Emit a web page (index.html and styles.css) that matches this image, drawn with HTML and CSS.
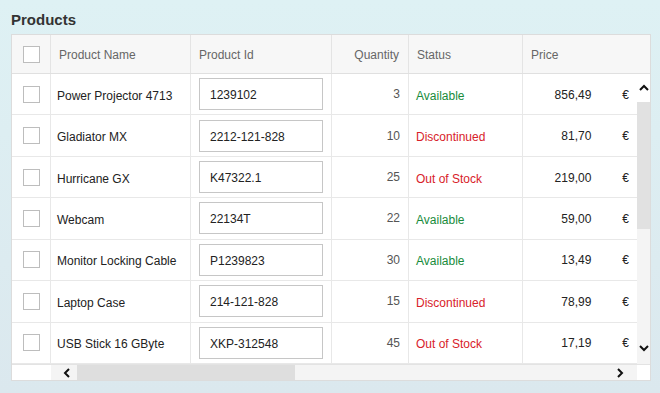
FILE: index.html
```html
<!DOCTYPE html>
<html>
<head>
<meta charset="utf-8">
<link rel="stylesheet" href="styles.css">
</head>
<body>
<div class="page">
  <h1 class="title">Products</h1>
  <div class="grid">
    <div class="head">
      <div class="hc chk"><span class="box"></span></div>
      <div class="hc">Product Name</div>
      <div class="hc">Product Id</div>
      <div class="hc right">Quantity</div>
      <div class="hc">Status</div>
      <div class="hc last">Price</div>
    </div>
    <div class="bodywrap">
      <div class="rows">
        <div class="row">
          <div class="c chk"><span class="box"></span></div>
          <div class="c">Power Projector 4713</div>
          <div class="c idc"><div class="inp">1239102</div></div>
          <div class="c qty">3</div>
          <div class="c ok">Available</div>
          <div class="c price"><span class="num">856,49</span><span class="cur">€</span></div>
        </div>
        <div class="row">
          <div class="c chk"><span class="box"></span></div>
          <div class="c">Gladiator MX</div>
          <div class="c idc"><div class="inp">2212-121-828</div></div>
          <div class="c qty">10</div>
          <div class="c bad">Discontinued</div>
          <div class="c price"><span class="num">81,70</span><span class="cur">€</span></div>
        </div>
        <div class="row">
          <div class="c chk"><span class="box"></span></div>
          <div class="c">Hurricane GX</div>
          <div class="c idc"><div class="inp">K47322.1</div></div>
          <div class="c qty">25</div>
          <div class="c bad">Out of Stock</div>
          <div class="c price"><span class="num">219,00</span><span class="cur">€</span></div>
        </div>
        <div class="row">
          <div class="c chk"><span class="box"></span></div>
          <div class="c">Webcam</div>
          <div class="c idc"><div class="inp">22134T</div></div>
          <div class="c qty">22</div>
          <div class="c ok">Available</div>
          <div class="c price"><span class="num">59,00</span><span class="cur">€</span></div>
        </div>
        <div class="row">
          <div class="c chk"><span class="box"></span></div>
          <div class="c">Monitor Locking Cable</div>
          <div class="c idc"><div class="inp">P1239823</div></div>
          <div class="c qty">30</div>
          <div class="c ok">Available</div>
          <div class="c price"><span class="num">13,49</span><span class="cur">€</span></div>
        </div>
        <div class="row">
          <div class="c chk"><span class="box"></span></div>
          <div class="c">Laptop Case</div>
          <div class="c idc"><div class="inp">214-121-828</div></div>
          <div class="c qty">15</div>
          <div class="c bad">Discontinued</div>
          <div class="c price"><span class="num">78,99</span><span class="cur">€</span></div>
        </div>
        <div class="row">
          <div class="c chk"><span class="box"></span></div>
          <div class="c">USB Stick 16 GByte</div>
          <div class="c idc"><div class="inp">XKP-312548</div></div>
          <div class="c qty">45</div>
          <div class="c bad">Out of Stock</div>
          <div class="c price"><span class="num">17,19</span><span class="cur">€</span></div>
        </div>
      </div>
      <div class="vscroll">
        <div class="vbtn"><svg width="10" height="7" viewBox="0 0 10 7"><path d="M1 6 L5 2 L9 6" fill="none" stroke="#111" stroke-width="2"/></svg></div>
        <div class="vthumb"></div>
        <div class="vtrack"></div>
        <div class="vbtn down"><svg width="10" height="7" viewBox="0 0 10 7"><path d="M1 1 L5 5 L9 1" fill="none" stroke="#111" stroke-width="2"/></svg></div>
      </div>
    </div>
    <div class="hscrollwrap">
      <div class="hfrozen"></div>
      <div class="hscroll">
        <div class="hbtn lbtn"><svg width="7" height="10" viewBox="0 0 7 10"><path d="M6 1 L2 5 L6 9" fill="none" stroke="#111" stroke-width="2"/></svg></div>
        <div class="hthumb"></div>
        <div class="htrack"></div>
        <div class="hbtn rbtn"><svg width="7" height="10" viewBox="0 0 7 10"><path d="M1 1 L5 5 L1 9" fill="none" stroke="#111" stroke-width="2"/></svg></div>
      </div>
      <div class="corner"></div>
    </div>
  </div>
</div>
</body>
</html>
```
FILE: styles.css
```css
html, body {
  margin: 0;
  height: 100%;
}
body {
  background: linear-gradient(#def1f4, #dbe8ee);
  font-family: "Liberation Sans", Arial, sans-serif;
  font-size: 12px;
  color: #222;
}
.page {
  padding: 11px 0 0 11px;
}
.title {
  margin: 0 0 5px 0;
  font-size: 15px;
  line-height: 18px;
  font-weight: bold;
  color: #333;
}
.grid {
  width: 640px;
  box-sizing: border-box;
  border: 1px solid #dcdcdc;
  background: #fff;
}
.head {
  display: grid;
  grid-template-columns: 39px 140px 141px 77px 114px 1fr;
  height: 39px;
  box-sizing: border-box;
  background: #f7f7f7;
  border-bottom: 1px solid #e0e0e0;
}
.hc {
  display: flex;
  align-items: center;
  padding: 1px 8px 0;
  border-right: 1px solid #e4e4e4;
  color: #666;
  box-sizing: border-box;
}
.hc.last { border-right: none; }
.hc.right { justify-content: flex-end; padding-right: 9px; }
.chk { justify-content: center; padding: 0 !important; }
.box {
  display: block;
  width: 17px;
  height: 17px;
  box-sizing: border-box;
  border: 1px solid #bdbdbd;
  background: #fff;
  margin-left: 1px;
}
.bodywrap {
  display: flex;
  height: 290px;
}
.rows {
  flex: 1;
  min-width: 0;
}
.row {
  display: grid;
  grid-template-columns: 39px 140px 141px 77px 114px 1fr;
  height: 41.4286px;
  box-sizing: border-box;
  border-bottom: 1px solid #e8e8e8;
}
.c {
  display: flex;
  align-items: center;
  padding: 3px 6px 0;
  border-right: 1px solid #e8e8e8;
  box-sizing: border-box;
  white-space: nowrap;
  min-width: 0;
}
.c.price { border-right: none; padding: 1px 8px 0 6px; }
.idc { padding: 0 8px; }
.inp {
  width: 124px;
  height: 32px;
  box-sizing: border-box;
  border: 1px solid #c6c6c6;
  display: flex;
  align-items: center;
  padding: 2px 0 0 10px;
  color: #222;
}
.qty { justify-content: flex-end; color: #555; padding: 0 8px 0 0; }
.ok { color: #188c3c; padding-left: 7px; }
.bad { color: #d8222a; padding-left: 7px; }
.num { flex: 1; text-align: right; }
.cur { margin-left: 31px; }
.vscroll {
  width: 13px;
  display: flex;
  flex-direction: column;
  background: #f4f4f4;
}
.vbtn {
  height: 28px;
  display: flex;
  justify-content: center;
  align-items: center;
  background: #fff;
}
.vbtn svg { margin-top: -2px; }
.vbtn.down { background: #f4f4f4; height: 28px; }
.vbtn.down svg { margin-top: -4px; }
.vthumb {
  height: 127px;
  background: #e1e1e1;
}
.vtrack { flex: 1; }
.hscrollwrap {
  display: flex;
  height: 15px;
  border-top: 1px solid #e3e3e3;
}
.hfrozen { width: 39px; background: #fff; }
.hscroll {
  flex: 1;
  display: flex;
  background: #f4f4f4;
}
.hbtn {
  width: 26px;
  display: flex;
  align-items: center;
  justify-content: center;
}
.hbtn.lbtn { justify-content: flex-start; padding-left: 12px; width: 14px; }
.hbtn.rbtn { width: 20px; justify-content: flex-start; padding-left: 0; }
.hthumb {
  width: 218px;
  background: #dedede;
}
.htrack { flex: 1; }
.corner { width: 13px; background: #fff; }
```
